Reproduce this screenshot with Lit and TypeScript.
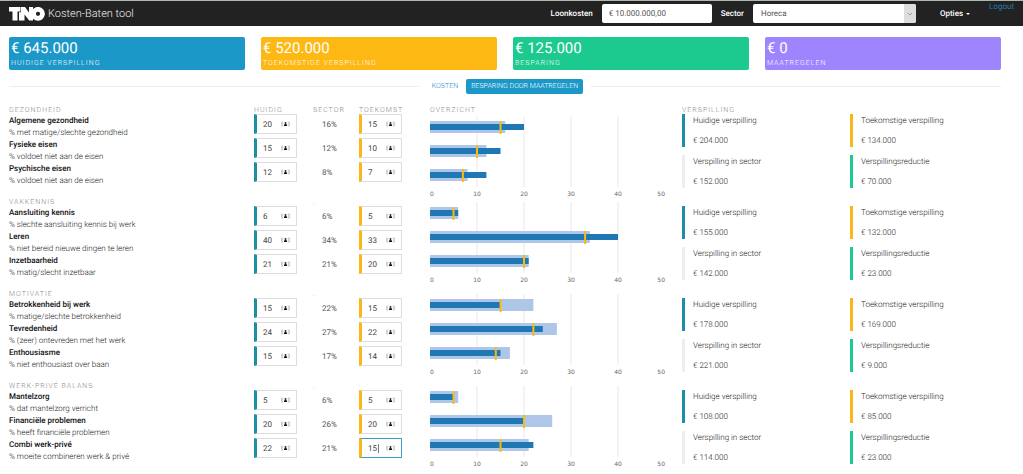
import { LitElement, html, svg, css, nothing } from "lit";
import { customElement, property } from "lit/decorators.js";
import { classMap } from "lit/directives/class-map.js";

interface Indicator {
  name: string;
  note: string;
  current: number;
  sector: number;
  future: number;
  active?: boolean;
}

interface Theme {
  title: string;
  items: Indicator[];
  waste: [string, string, string, string];
}

const THEMES: Theme[] = [
  {
    title: "Gezondheid",
    items: [
      { name: "Algemene gezondheid", note: "% met matige/slechte gezondheid", current: 20, sector: 16, future: 15 },
      { name: "Fysieke eisen", note: "% voldoet niet aan de eisen", current: 15, sector: 12, future: 10 },
      { name: "Psychische eisen", note: "% voldoet niet aan de eisen", current: 12, sector: 8, future: 7 },
    ],
    waste: ["204.000", "134.000", "152.000", "70.000"],
  },
  {
    title: "Vakkennis",
    items: [
      { name: "Aansluiting kennis", note: "% slechte aansluiting kennis bij werk", current: 6, sector: 6, future: 5 },
      { name: "Leren", note: "% niet bereid nieuwe dingen te leren", current: 40, sector: 34, future: 33 },
      { name: "Inzetbaarheid", note: "% matig/slecht inzetbaar", current: 21, sector: 21, future: 20 },
    ],
    waste: ["155.000", "132.000", "142.000", "23.000"],
  },
  {
    title: "Motivatie",
    items: [
      { name: "Betrokkenheid bij werk", note: "% matige/slechte betrokkenheid", current: 15, sector: 22, future: 15 },
      { name: "Tevredenheid", note: "% (zeer) ontevreden met het werk", current: 24, sector: 27, future: 22 },
      { name: "Enthousiasme", note: "% niet enthousiast over baan", current: 15, sector: 17, future: 14 },
    ],
    waste: ["178.000", "169.000", "221.000", "9.000"],
  },
  {
    title: "Werk-privé balans",
    items: [
      { name: "Mantelzorg", note: "% dat mantelzorg verricht", current: 5, sector: 6, future: 5 },
      { name: "Financiële problemen", note: "% heeft financiële problemen", current: 20, sector: 26, future: 20 },
      { name: "Combi werk-privé", note: "% moeite combineren werk & privé", current: 22, sector: 21, future: 15, active: true },
    ],
    waste: ["108.000", "85.000", "114.000", "23.000"],
  },
];

const WASTE_LABELS = ["Huidige verspilling", "Toekomstige verspilling", "Verspilling in sector", "Verspillingsreductie"];
const WASTE_TONES = ["teal", "amber", "pale", "green"];

@customElement("bullet-chart")
export class BulletChart extends LitElement {
  @property({ attribute: false }) items: Indicator[] = [];

  static styles = css`
    :host { display: block; }
    .chart { display: block; width: 100%; height: 80px; overflow: visible; }
    .grid { stroke: #e9e9e9; stroke-width: 1; }
    .sector { fill: #aec7e8; }
    .current { fill: #1f77b4; }
    .future { stroke: #fdb813; stroke-width: 2; }
    .tick { font: 6px "DejaVu Sans", sans-serif; fill: #666; }
  `;

  render() {
    const pct = (v: number) => `${v * 2}%`;
    return html`<svg class="chart" role="img" aria-label="Overzicht">
      ${[10, 20, 30, 40].map((v) => svg`<line class="grid" x1=${pct(v)} x2=${pct(v)} y1="1" y2="72"></line>`)}
      ${this.items.map((item, i) => {
        const y = 12 + i * 24;
        return svg`
          <rect class="sector" x="0" y=${y - 6} width=${pct(item.sector)} height="12"></rect>
          <rect class="current" x="0" y=${y - 3} width=${pct(item.current)} height="6"></rect>
          <line class="future" x1=${pct(item.future)} x2=${pct(item.future)} y1=${y - 6} y2=${y + 7}></line>`;
      })}
      ${[0, 10, 20, 30, 40, 50].map(
        (v) => svg`<text class="tick" x=${pct(v)} y="81"
          text-anchor=${v === 0 ? "start" : v === 50 ? "end" : "middle"}>${v}</text>`
      )}
    </svg>`;
  }
}

@customElement("percent-field")
export class PercentField extends LitElement {
  @property() label = "";
  @property() tone = "teal";
  @property({ type: Number }) value = 0;
  @property({ type: Boolean }) active = false;

  static styles = css`
    :host { display: block; }
    .field {
      display: flex; align-items: center; box-sizing: border-box; width: 43px; height: 20px;
      border: 1px solid #ddd; border-left: 3px solid #1b8fa3; padding: 0 6px; background: #fff;
    }
    .field.amber { border-left-color: #fbb61a; }
    .field.active { border-top-color: #3b9cc4; border-right-color: #3b9cc4; border-bottom-color: #3b9cc4; }
    .value {
      flex: 0 0 auto; width: 10px; border: 0; padding: 0; margin: 0; outline: 0; background: none;
      font: 400 8px Roboto, sans-serif; color: #444; caret-color: transparent;
      text-rendering: geometricPrecision;
    }
    .caret { width: 1px; height: 9px; background: #777; }
    .card { display: block; width: 9px; height: 6px; margin-left: auto; }
  `;

  render() {
    return html`<div class=${classMap({ field: true, amber: this.tone === "amber", active: this.active })}>
      <input class="value" type="text" aria-label=${this.label} .value=${String(this.value)} />
      ${this.active ? html`<span class="caret"></span>` : nothing}
      <svg class="card" viewBox="0 0 18 12" aria-hidden="true">
        <path d="M4.500 2H1v8h3.500M13.500 2h3.500v8h-3.500" fill="#ddd" stroke="#bbb" stroke-width="1.200" />
        <circle cx="9" cy="4" r="1.900" fill="#222" />
        <path d="M6 10V8.500q0-2.500 3-2.500t3 2.500v1.500z" fill="#111" />
      </svg>
    </div>`;
  }
}

@customElement("app-root")
export class AppRoot extends LitElement {
  static styles = css`
    :host {
      display: block; background: #fff; color: #222;
      font: 300 8px/12px Roboto, sans-serif; text-rendering: geometricPrecision;
    }
    * { box-sizing: border-box; }
    .bar {
      display: flex; align-items: center; height: 26px; padding: 0 9px;
      background: #222; border-top: 1px solid #aeb6b0; color: #fff;
    }
    .logo { display: block; width: 36px; height: 14px; }
    .title { margin: 0 auto 0 3px; font-size: 11px; font-weight: 300; line-height: 20px; color: #eee; }
    .bar-label { font-weight: 500; margin-right: 9px; }
    .amount, .sector {
      height: 19px; border: 0; border-radius: 2px; margin: 0; padding: 0 7px; background: #fff;
      font: 400 8px Roboto, sans-serif; color: #555; text-rendering: geometricPrecision;
    }
    .amount { width: 110px; margin-right: 9px; }
    .picker { display: grid; width: 163px; }
    .sector { grid-area: 1 / 1; width: 100%; appearance: none; padding: 0 8px; }
    .arrow {
      grid-area: 1 / 1; justify-self: end; width: 12px; height: 19px; background: #ddd;
      border-radius: 0 2px 2px 0; pointer-events: none;
    }
    .options {
      display: flex; align-items: center; gap: 3px; margin: 0 19px 0 24px; border: 0; padding: 0;
      background: none; color: #fff; font: 500 8px/12px Roboto, sans-serif; text-rendering: geometricPrecision;
    }
    .triangle { border: 2px solid transparent; border-top-color: #fff; border-bottom: 0; }
    .logout { align-self: flex-start; color: #1f7fa9; font-weight: 400; text-decoration: none; }
    .page { padding: 11px 22px 0 9px; }
    .cards { display: grid; grid-template-columns: repeat(4, 1fr); gap: 16px; }
    .card { height: 33px; padding: 2px 2px 0; border-radius: 2px; color: #fff; }
    .card.blue { background: #1b97c8; }
    .card.amber { background: #fdb813; }
    .card.green { background: #1cc98e; }
    .card.purple { background: #9f85fd; }
    .total { font-size: 15px; line-height: 18px; font-weight: 400; }
    .caption { font-size: 7px; line-height: 12px; letter-spacing: 1px; text-transform: uppercase; }
    .tabs { display: flex; align-items: center; gap: 3px; margin: 9px 0; }
    .tabs::before, .tabs::after { content: ""; flex: 1; height: 1px; background: #eee; }
    .tab {
      height: 15px; border: 0; border-radius: 2px; padding: 0 5px; background: none;
      color: #1b8fc4; font: 300 7px/15px Roboto, sans-serif; text-transform: uppercase;
      text-rendering: geometricPrecision;
    }
    .tab:first-child { margin-left: 5px; }
    .tab.on { background: #1b97c8; color: #fff; margin-right: 5px; }
    .theme { display: grid; grid-template-columns: 245fr 176fr 252fr 319fr; height: 92px; }
    .head {
      margin: 0; height: 11px; font-size: 7px; line-height: 14px; font-weight: 300; letter-spacing: 1px;
      text-transform: uppercase; color: #888; white-space: nowrap;
    }
    .labels .head { height: 12px; }
    .name { font-weight: 500; color: #111; }
    .note { margin: 0; }
    .figures { display: grid; grid-template-columns: 59fr 46fr 71fr; grid-template-rows: 11px; grid-auto-rows: 24px; }
    .share { padding-left: 9px; line-height: 21px; font-weight: 400; color: #555; }
    .plot { padding: 6px 17px 0 0; }
    .plot.first { padding-top: 0; }
    .plot.first .head { height: 12px; }
    .waste { display: grid; grid-template-columns: 168fr 151fr; grid-auto-rows: 33px; row-gap: 8px; }
    .entry {
      display: flex; flex-direction: column; justify-content: space-between; line-height: 13px;
      border-left: 3px solid #1b8fa3; padding-left: 8px;
    }
    .entry.amber { border-color: #fbb61a; }
    .entry.pale { border-color: #eee; }
    .entry.green { border-color: #1cc98e; }
  `;

  private renderTheme(theme: Theme, index: number) {
    const first = index === 0;
    return html`<section class="theme">
      <div class="labels">
        <h2 class="head">${theme.title}</h2>
        ${theme.items.map((i) => html`<div class="name">${i.name}</div><p class="note">${i.note}</p>`)}
      </div>
      <div class="figures">
        <div class="head">${first ? "Huidig" : nothing}</div>
        <div class="head">${first ? "Sector" : "."}</div>
        <div class="head">${first ? "Toekomst" : nothing}</div>
        ${theme.items.map(
          (i) => html`
            <percent-field label="${i.name}, huidig" tone="teal" .value=${i.current}></percent-field>
            <span class="share">${i.sector}%</span>
            <percent-field label="${i.name}, toekomst" tone="amber" .value=${i.future} ?active=${i.active}></percent-field>`
        )}
      </div>
      <div class=${classMap({ plot: true, first })}>
        ${first ? html`<div class="head">Overzicht</div>` : nothing}
        <bullet-chart .items=${theme.items}></bullet-chart>
      </div>
      <div>
        <div class="head">${first ? "Verspilling" : nothing}</div>
        <div class="waste">
          ${theme.waste.map(
            (amount, i) => html`<div class="entry ${WASTE_TONES[i]}">
              <span>${WASTE_LABELS[i]}</span><span>€ ${amount}</span>
            </div>`
          )}
        </div>
      </div>
    </section>`;
  }

  private renderCard(tone: string, total: string, caption: string) {
    return html`<div class="card ${tone}">
      <div class="total">€ ${total}</div>
      <div class="caption">${caption}</div>
    </div>`;
  }

  render() {
    return html`
      <header class="bar">
        <svg class="logo" viewBox="0 0 36 14" role="img" aria-label="TNO">
          <path d="M0 0H11.500V4.500H8.500V13.500H3.500V4.500H0Z" fill="#fff" />
          <path d="M12 0H16L20 5.500V0H24V13.500H20.200L15.500 7.500V13.500H10V5.200H12Z" fill="#fff" />
          <circle cx="29" cy="6.800" r="4.500" fill="#222" stroke="#fff" stroke-width="4.800" />
        </svg>
        <h1 class="title">Kosten-Baten tool</h1>
        <label class="bar-label" for="amount">Loonkosten</label>
        <input class="amount" id="amount" type="text" value="€ 10.000.000,00" />
        <label class="bar-label" for="sector">Sector</label>
        <div class="picker">
          <select class="sector" id="sector"><option>Horeca</option></select>
          <svg class="arrow" viewBox="0 0 12 19" aria-hidden="true">
            <path d="M4 9l2 2 2-2" fill="none" stroke="#999" />
          </svg>
        </div>
        <button class="options" type="button">Opties <span class="triangle"></span></button>
        <a class="logout" href="#">Logout</a>
      </header>
      <main class="page">
        <div class="cards">
          ${this.renderCard("blue", "645.000", "Huidige verspilling")}
          ${this.renderCard("amber", "520.000", "Toekomstige verspilling")}
          ${this.renderCard("green", "125.000", "Besparing")}
          ${this.renderCard("purple", "0", "Maatregelen")}
        </div>
        <nav class="tabs">
          <button class="tab" type="button">Kosten</button>
          <button class="tab on" type="button">Besparing door maatregelen</button>
        </nav>
        ${THEMES.map((t, i) => this.renderTheme(t, i))}
      </main>`;
  }
}
